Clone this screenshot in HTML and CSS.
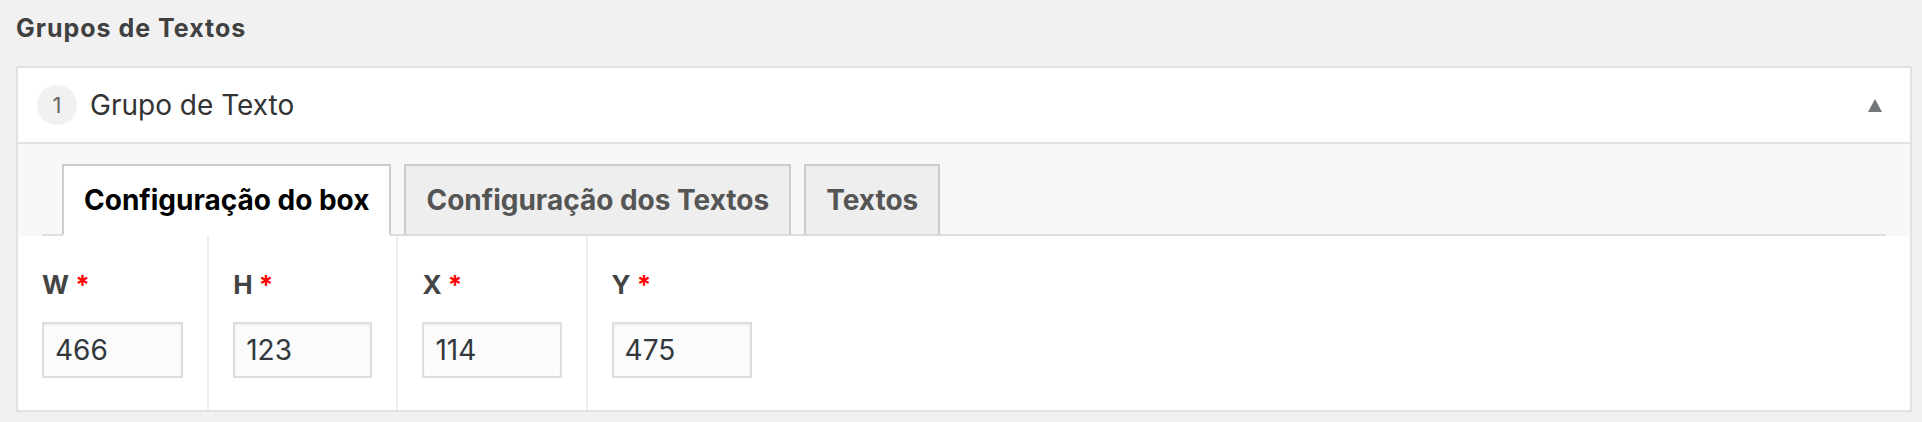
FILE: index.html
```html
<!DOCTYPE html>
<html lang="pt">
<head>
<meta charset="utf-8">
<title>Grupos de Textos</title>
<link rel="stylesheet" href="styles.css">
</head>
<body>
<div class="page">
  <h2 class="section-title">Grupos de Textos</h2>
  <div class="panel">
    <div class="panel-head">
      <span class="order">1</span>
      <span class="head-title">Grupo de Texto</span>
      <span class="toggle"></span>
    </div>
    <div class="tab-wrap">
      <ul class="tabs">
        <li class="tab active">Configuração do box</li>
        <li class="tab">Configuração dos Textos</li>
        <li class="tab">Textos</li>
      </ul>
    </div>
    <div class="fields">
      <div class="field">
        <label class="field-label">W <span class="req">*</span></label>
        <input class="field-input" type="text" value="466">
      </div>
      <div class="field">
        <label class="field-label">H <span class="req">*</span></label>
        <input class="field-input" type="text" value="123">
      </div>
      <div class="field">
        <label class="field-label">X <span class="req">*</span></label>
        <input class="field-input" type="text" value="114">
      </div>
      <div class="field field-last">
        <label class="field-label">Y <span class="req">*</span></label>
        <input class="field-input" type="text" value="475">
      </div>
    </div>
  </div>
</div>
</body>
</html>
```
FILE: styles.css
```css
* { box-sizing: border-box; }
html, body { margin: 0; padding: 0; }
body {
  background: #f1f1f1;
  font-family: Inter, "Noto Sans", sans-serif;
  color: #444;
}
.page { padding: 13px 10px 0 16px; }
.section-title {
  margin: 0 0 23px;
  font-size: 25px;
  line-height: 30px;
  font-weight: 700;
  letter-spacing: 1px;
  color: #404040;
}
.panel {
  border: 2px solid #e2e2e2;
  background: #fff;
}
.panel-head {
  height: 76px;
  border-bottom: 2px solid #e2e2e2;
  display: flex;
  align-items: center;
  padding: 0 28px 0 19px;
}
.order {
  width: 40px;
  height: 40px;
  border-radius: 50%;
  background: #f1f1f1;
  color: #666;
  font-size: 22px;
  display: flex;
  align-items: center;
  justify-content: center;
  margin-right: 13px;
}
.head-title {
  font-size: 28px;
  color: #333;
  flex: 1;
}
.toggle {
  width: 0;
  height: 0;
  border-left: 7.5px solid transparent;
  border-right: 7.5px solid transparent;
  border-bottom: 13px solid #72777c;
}
.tab-wrap {
  background: #f8f8f8;
  padding: 20px 24px 0;
}
.tabs {
  list-style: none;
  margin: 0;
  padding: 0 0 0 20px;
  display: flex;
  gap: 13px;
  border-bottom: 2px solid #dddddd;
}
.tab {
  height: 72px;
  margin-bottom: -2px;
  border: 2px solid #cccccc;
  border-bottom-color: #dddddd;
  background: #eeeeee;
  color: #555;
  font-size: 28px;
  font-weight: 700;
  padding: 0 20px;
  display: flex;
  align-items: center;
}
.tab.active {
  background: #fff;
  border-bottom-color: #fff;
  color: #000;
}
.fields {
  display: flex;
  height: 174px;
}
.field {
  flex: 0 0 10%;
  padding: 31px 24px 0;
}
.field + .field { border-left: 2px solid #eeeeee; }
.field-last { flex: 1 1 auto; }
.field-last .field-input { width: 140px; }
.field-label {
  display: block;
  font-size: 26px;
  line-height: 36px;
  font-weight: 700;
  color: #444;
  margin-bottom: 19px;
}
.req { color: #ff0000; }
.field-input {
  display: block;
  width: 100%;
  height: 56px;
  border: 2px solid #dddddd;
  background: #fbfbfb;
  box-shadow: inset 0 1px 2px rgba(0,0,0,0.07);
  padding: 0 11px;
  font-family: Inter, "Noto Sans", sans-serif;
  font-size: 28px;
  color: #32373c;
  outline: none;
}
```
